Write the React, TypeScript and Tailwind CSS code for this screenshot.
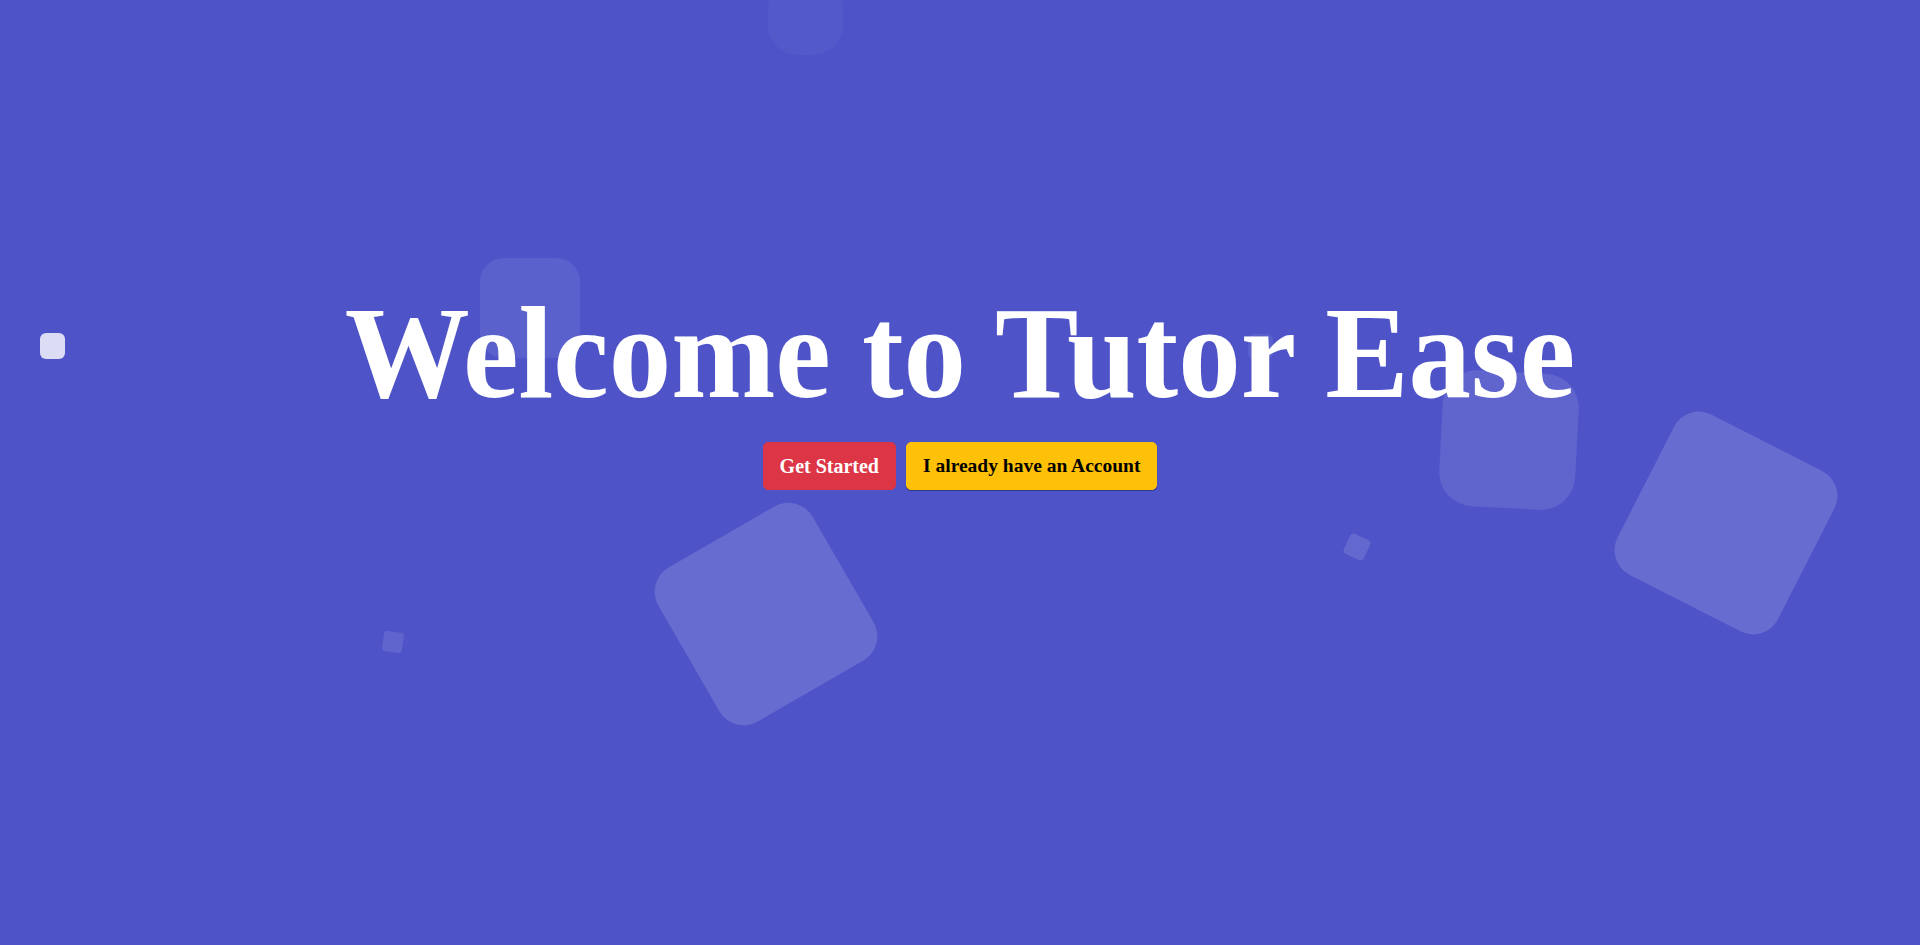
export default function App() {
  return (
    <main className="relative h-[945px] w-full overflow-hidden bg-[#4e54c8] font-['Liberation_Serif','Times_New_Roman',serif]">
      {/* floating squares (decorative background) */}
      <ul className="absolute inset-0">
        <li className="absolute left-[768px] top-[-20px] h-[75px] w-[75px] rounded-[30px] bg-white/[0.03]" />
        <li className="absolute left-[40px] top-[333px] h-[26px] w-[25px] rounded-[6px] bg-[#dcdcf5]" />
        <li className="absolute left-[480px] top-[258px] h-[100px] w-[100px] rounded-[24px] bg-white/[0.07]" />
        <li className="absolute left-[1248px] top-[334px] h-[25px] w-[25px] rounded-[6px] bg-white/[0.07]" />
        <li className="absolute left-[1441px] top-[372px] h-[136px] w-[136px] rotate-[3deg] rounded-[34px] bg-white/[0.1]" />
        <li className="absolute left-[1636px] top-[433px] h-[180px] w-[180px] rotate-[27deg] rounded-[28px] bg-white/[0.14]" />
        <li className="absolute left-[1346px] top-[536px] h-[22px] w-[22px] rotate-[25deg] rounded-[4px] bg-white/[0.12]" />
        <li className="absolute left-[677px] top-[525px] h-[178px] w-[178px] -rotate-[30deg] rounded-[28px] bg-white/[0.14]" />
        <li className="absolute left-[383px] top-[632px] h-[20px] w-[20px] rotate-[8deg] rounded-[3px] bg-white/[0.1]" />
      </ul>

      <div className="relative flex flex-col items-center pt-[293px]">
        <h1 className="mb-[24px] origin-[50%_104px] scale-y-[1.05] text-[125px] font-bold leading-none text-white">Welcome to Tutor Ease</h1>
        <div className="flex gap-[10px]">
          <button className="rounded-[5px] border border-[#dc3545] bg-[#dc3545] px-4 py-2 text-[20px] font-bold leading-[30px] text-white">
            Get Started
          </button>
          <button className="rounded-[5px] border border-[#ffc107] bg-[#ffc107] px-4 py-2 text-[19.5px] font-bold leading-[30px] text-black shadow-[0_1px_1px_rgba(0,0,0,0.35)]">
            I already have an Account
          </button>
        </div>
      </div>
    </main>
  )
}
